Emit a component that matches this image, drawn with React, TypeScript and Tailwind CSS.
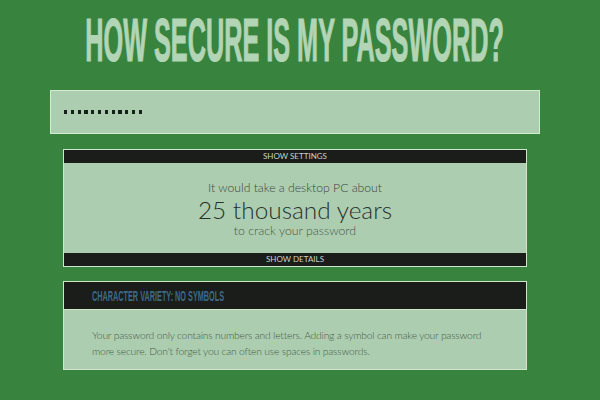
import React from "react";

const Dots = ({ count }: { count: number }) => (
  <div className="flex items-center gap-[3.5px]">
    {Array.from({ length: count }).map((_, i) => (
      <div key={i} className="h-[3.6px] w-[3.3px] bg-[#142116]" />
    ))}
  </div>
);

const Bar = ({ label }: { label: string }) => (
  <div className="flex h-[13px] items-center justify-center bg-[#1a1d1a] text-[8px] leading-[13px] text-[#c9d2c9] uppercase">
    {label}
  </div>
);

const App = () => {
  return (
    <div className="h-[400px] w-[600px] overflow-hidden bg-[#38843f] font-['Lato',sans-serif]">
      <div className="flex w-[590px] flex-col items-center">
        {/* title */}
        <div className="mt-[10px] flex h-[61px] w-full justify-center">
          <h1 className="shrink-0 scale-x-[0.414] whitespace-nowrap font-['Liberation_Sans',sans-serif] text-[61px] leading-[61px] font-bold text-[#b2d5b5] [-webkit-text-stroke:1.2px_#b2d5b5]">
            HOW SECURE IS MY PASSWORD?
          </h1>
        </div>

        {/* password field */}
        <div className="mt-[19px] flex h-[44px] w-[490px] items-center border border-[#d3ecd0] bg-[#adcdb1] pl-[13px]">
          <Dots count={12} />
        </div>

        {/* result */}
        <section className="mt-[15px] flex h-[118px] w-[464px] flex-col border border-[#cfe6cb] bg-[#adcdb1]">
          <Bar label="Show Settings" />
          <div className="flex h-[90px] flex-col items-center pt-[17px] font-light">
            <p className="text-[12.2px] leading-[15px] text-[#3b473d]">It would take a desktop PC about</p>
            <p className="text-[24.4px] leading-[29px] text-[#283229]">25 thousand years</p>
            <p className="text-[12.3px] leading-[14px] text-[#485649]">to crack your password</p>
          </div>
          <Bar label="Show Details" />
        </section>

        {/* details */}
        <section className="mt-[14px] flex h-[89px] w-[464px] flex-col border border-[#cfe6cb] bg-[#adcdb1]">
          <div className="flex h-[28px] items-center overflow-hidden border-b border-[#cfe6cb] bg-[#1a1d1a] pl-[28px]">
            <h2 className="shrink-0 origin-left scale-x-[0.47] whitespace-nowrap font-['Liberation_Sans',sans-serif] text-[15.5px] leading-[16px] font-bold text-[#3d6a87]">
              CHARACTER VARIETY: NO SYMBOLS
            </h2>
          </div>
          <p className="w-[430px] pt-[17px] pl-[28px] text-[10.3px] leading-[16px] font-light tracking-[-0.2px] text-[#465c49]">
            Your password only contains numbers and letters. Adding a symbol can make your password
            more secure. Don't forget you can often use spaces in passwords.
          </p>
        </section>
      </div>
    </div>
  );
};

export default App;
